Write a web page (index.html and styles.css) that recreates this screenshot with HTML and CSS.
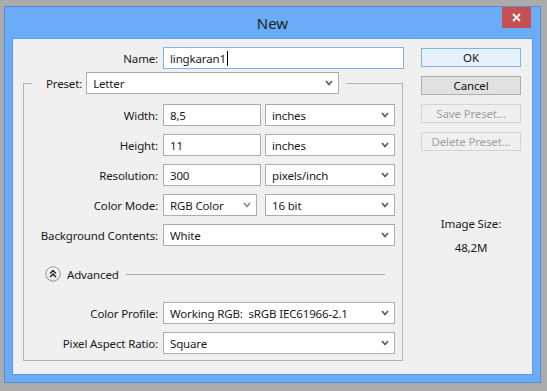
FILE: index.html
```html
<!DOCTYPE html>
<html>
<head>
<meta charset="utf-8">
<link rel="stylesheet" href="styles.css">
</head>
<body>
<div class="window">
  <div class="titlebar">
    <div></div>
    <div class="title">New</div>
    <div class="close">
      <svg width="9" height="9" viewBox="0 0 9 9"><path d="M1 1 L8 8 M8 1 L1 8" stroke="#fff" stroke-width="1.8"/></svg>
    </div>
  </div>
  <div class="content">
    <div class="main">
      <div class="row name-row">
        <div class="label">Name:</div>
        <div class="field name-field">lingkaran1<span class="caret"></span></div>
      </div>
      <fieldset class="group">
        <legend class="legend">
          <span class="label">Preset:</span>
          <div class="field select preset"><span class="val">Letter</span><svg class="chev" width="8" height="6" viewBox="0 0 8 6"><path d="M1 1 L4 4.5 L7 1" fill="none" stroke="#5a5a5a" stroke-width="1.7"/></svg></div>
        </legend>
        <div class="rows">
          <div class="row">
            <div class="label">Width:</div>
            <div class="fields">
              <div class="field num">8,5</div>
              <div class="field select unit"><span class="val">inches</span><svg class="chev" width="8" height="6" viewBox="0 0 8 6"><path d="M1 1 L4 4.5 L7 1" fill="none" stroke="#5a5a5a" stroke-width="1.7"/></svg></div>
            </div>
          </div>
          <div class="row">
            <div class="label">Height:</div>
            <div class="fields">
              <div class="field num">11</div>
              <div class="field select unit"><span class="val">inches</span><svg class="chev" width="8" height="6" viewBox="0 0 8 6"><path d="M1 1 L4 4.5 L7 1" fill="none" stroke="#5a5a5a" stroke-width="1.7"/></svg></div>
            </div>
          </div>
          <div class="row">
            <div class="label">Resolution:</div>
            <div class="fields">
              <div class="field num">300</div>
              <div class="field select unit"><span class="val">pixels/inch</span><svg class="chev" width="8" height="6" viewBox="0 0 8 6"><path d="M1 1 L4 4.5 L7 1" fill="none" stroke="#5a5a5a" stroke-width="1.7"/></svg></div>
            </div>
          </div>
          <div class="row">
            <div class="label">Color Mode:</div>
            <div class="fields">
              <div class="field select mode"><span class="val">RGB Color</span><svg class="chev" width="8" height="6" viewBox="0 0 8 6"><path d="M1 1 L4 4.5 L7 1" fill="none" stroke="#8a8a8a" stroke-width="1.7"/></svg></div>
              <div class="field select unit bits"><span class="val">16 bit</span><svg class="chev" width="8" height="6" viewBox="0 0 8 6"><path d="M1 1 L4 4.5 L7 1" fill="none" stroke="#5a5a5a" stroke-width="1.7"/></svg></div>
            </div>
          </div>
          <div class="row">
            <div class="label">Background Contents:</div>
            <div class="fields">
              <div class="field select wide"><span class="val">White</span><svg class="chev" width="8" height="6" viewBox="0 0 8 6"><path d="M1 1 L4 4.5 L7 1" fill="none" stroke="#5a5a5a" stroke-width="1.7"/></svg></div>
            </div>
          </div>
          <div class="advanced">
            <svg width="16" height="16" viewBox="0 0 16 16">
              <defs><linearGradient id="g" x1="0" y1="0" x2="0" y2="1"><stop offset="0" stop-color="#ffffff"/><stop offset="1" stop-color="#e4e4e4"/></linearGradient></defs>
              <circle cx="8" cy="8" r="7.2" fill="url(#g)" stroke="#8f8f8f" stroke-width="1"/>
              <path d="M5 7.5 L8 4.6 L11 7.5 M5 11 L8 8.1 L11 11" fill="none" stroke="#2a2a2a" stroke-width="1.5"/>
            </svg>
            <span class="adv-text">Advanced</span>
            <span class="adv-line"></span>
          </div>
          <div class="row">
            <div class="label">Color Profile:</div>
            <div class="fields">
              <div class="field select wide"><span class="val">Working RGB:&nbsp; sRGB IEC61966-2.1</span><svg class="chev" width="8" height="6" viewBox="0 0 8 6"><path d="M1 1 L4 4.5 L7 1" fill="none" stroke="#5a5a5a" stroke-width="1.7"/></svg></div>
            </div>
          </div>
          <div class="row">
            <div class="label">Pixel Aspect Ratio:</div>
            <div class="fields">
              <div class="field select wide"><span class="val">Square</span><svg class="chev" width="8" height="6" viewBox="0 0 8 6"><path d="M1 1 L4 4.5 L7 1" fill="none" stroke="#5a5a5a" stroke-width="1.7"/></svg></div>
            </div>
          </div>
        </div>
      </fieldset>
    </div>
    <div class="side">
      <div class="btn primary">OK</div>
      <div class="btn">Cancel</div>
      <div class="btn disabled">Save Preset...</div>
      <div class="btn disabled">Delete Preset...</div>
      <div class="size">
        <div>Image Size:</div>
        <div>48,2M</div>
      </div>
    </div>
  </div>
</div>
</body>
</html>
```
FILE: styles.css
```css
* { box-sizing: border-box; }
html, body {
  margin: 0;
  padding: 0;
}
body {
  width: 547px;
  height: 391px;
  overflow: hidden;
  background: #ababab;
  font-family: "Noto Sans", "Open Sans", sans-serif;
  font-size: 11.5px;
  letter-spacing: -0.15px;
  color: #1a1a1a;
}
.window {
  margin: 6px 0 0 4px;
  width: 537px;
  height: 377px;
  border: 1px solid #4f8fd8;
  background: #6aacf5;
  padding: 0 7px 7px 7px;
  display: flex;
  flex-direction: column;
}
.titlebar {
  height: 31px;
  flex: none;
  display: grid;
  grid-template-columns: 1fr auto 1fr;
}
.title {
  align-self: center;
  font-size: 15px;
  letter-spacing: 0;
  color: #202020;
  line-height: 18px;
  margin-top: 1px;
}
.close {
  justify-self: end;
  align-self: start;
  width: 29px;
  height: 21px;
  margin-right: 2px;
  background: #c75050;
  display: flex;
  align-items: center;
  justify-content: center;
}
.content {
  flex: 1;
  background: #f0f0f0;
  border: 1px solid #5c9be2;
  display: flex;
}
.main {
  width: 408px;
  flex: none;
  padding-top: 8px;
}
.row {
  display: grid;
  grid-template-columns: 126px auto;
  column-gap: 5px;
  align-items: center;
  height: 22px;
}
.name-row {
  grid-template-columns: 145px auto;
}
.label {
  text-align: right;
  white-space: nowrap;
}
.field {
  height: 22px;
  background: #fff;
  border: 1px solid #abadb3;
  padding: 0 6px;
  display: flex;
  align-items: center;
  white-space: nowrap;
  overflow: hidden;
}
.name-field {
  width: 241px;
  border-color: #7eb4ea;
}
.caret {
  display: inline-block;
  width: 1px;
  height: 15px;
  background: #000;
  margin-left: 1px;
}
.group {
  margin: 3px 0 0 10px;
  width: 380px;
  border: 1px solid #b4b4b4;
  padding: 10px 7px 6px 8px;
}
.legend {
  padding: 0 7px 0 14px;
  display: flex;
  align-items: center;
  gap: 4px;
}
.select .val { flex: 1; }
.select { padding-right: 5px; }
.preset { width: 253px; }
.rows {
  display: flex;
  flex-direction: column;
  gap: 8px;
}
.fields {
  display: flex;
}
.num { width: 98px; }
.unit { width: 130px; margin-left: 4px; }
.mode { width: 94px; }
.bits { margin-left: 8px; }
.wide { width: 232px; }
.advanced {
  display: flex;
  align-items: center;
  height: 16px;
  margin: 12px 10px 12px 13px;
}
.adv-text { margin-left: 6px; }
.adv-line {
  flex: 1;
  height: 1px;
  background: #a8a8a8;
  margin-left: 7px;
}
.side {
  width: 100px;
  padding-top: 9px;
  display: flex;
  flex-direction: column;
  gap: 9px;
}
.btn {
  height: 19px;
  border: 1px solid #adadad;
  background: #e1e1e1;
  display: flex;
  align-items: center;
  justify-content: center;
  color: #111;
}
.btn.primary {
  border-color: #7eb4ea;
  background: #e5f1fb;
}
.btn.disabled {
  border-color: #d5d5d5;
  background: #f0f0f0;
  color: #a0a0a0;
}
.size {
  margin-top: 56px;
  display: flex;
  flex-direction: column;
  align-items: center;
  gap: 8px;
  line-height: 16px;
}
```
